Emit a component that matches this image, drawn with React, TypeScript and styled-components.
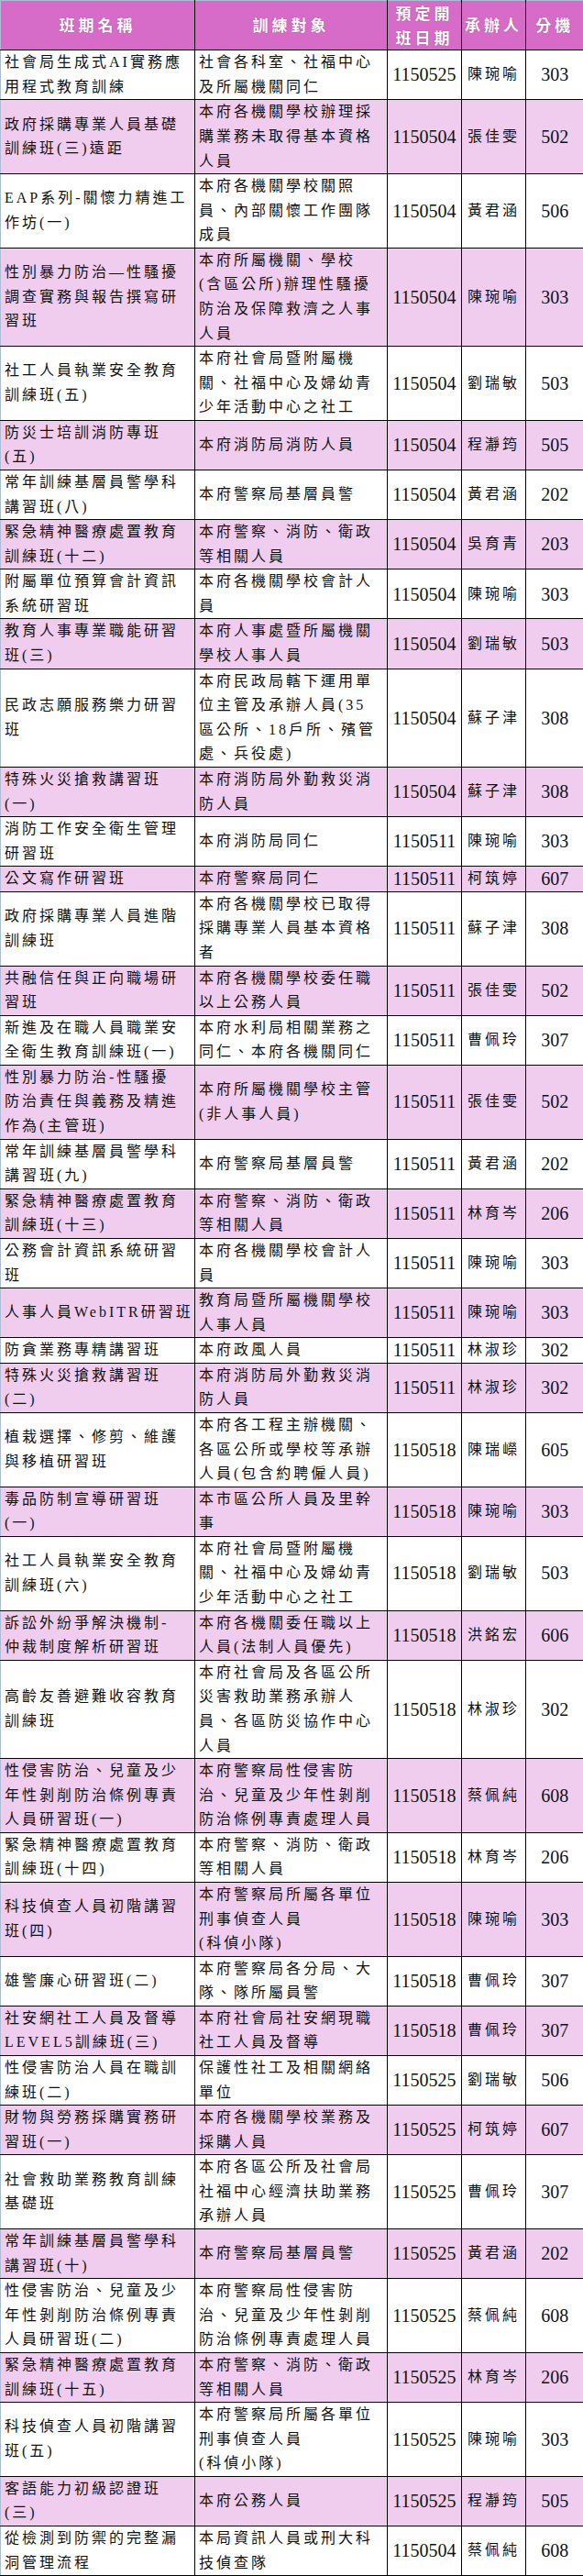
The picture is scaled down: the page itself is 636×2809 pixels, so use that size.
import React from "react";
import styled, { createGlobalStyle } from "styled-components";

type Course = {
    name: string[];
    target: string[];
    date: string;
    staff: string;
    ext: string;
};

const courses: Course[] = [
    { name: ["社會局生成式AI實務應", "用程式教育訓練"], target: ["社會各科室、社福中心", "及所屬機關同仁"], date: "1150525", staff: "陳琬喻", ext: "303" },
    { name: ["政府採購專業人員基礎", "訓練班(三)遠距"], target: ["本府各機關學校辦理採", "購業務未取得基本資格", "人員"], date: "1150504", staff: "張佳雯", ext: "502" },
    { name: ["EAP系列-關懷力精進工", "作坊(一)"], target: ["本府各機關學校關照", "員、內部關懷工作團隊", "成員"], date: "1150504", staff: "黃君涵", ext: "506" },
    { name: ["性別暴力防治—性騷擾", "調查實務與報告撰寫研", "習班"], target: ["本府所屬機關、學校", "(含區公所)辦理性騷擾", "防治及保障救濟之人事", "人員"], date: "1150504", staff: "陳琬喻", ext: "303" },
    { name: ["社工人員執業安全教育", "訓練班(五)"], target: ["本府社會局暨附屬機", "關、社福中心及婦幼青", "少年活動中心之社工"], date: "1150504", staff: "劉瑞敏", ext: "503" },
    { name: ["防災士培訓消防專班", "(五)"], target: ["本府消防局消防人員"], date: "1150504", staff: "程瀞筠", ext: "505" },
    { name: ["常年訓練基層員警學科", "講習班(八)"], target: ["本府警察局基層員警"], date: "1150504", staff: "黃君涵", ext: "202" },
    { name: ["緊急精神醫療處置教育", "訓練班(十二)"], target: ["本府警察、消防、衛政", "等相關人員"], date: "1150504", staff: "吳育青", ext: "203" },
    { name: ["附屬單位預算會計資訊", "系統研習班"], target: ["本府各機關學校會計人", "員"], date: "1150504", staff: "陳琬喻", ext: "303" },
    { name: ["教育人事專業職能研習", "班(三)"], target: ["本府人事處暨所屬機關", "學校人事人員"], date: "1150504", staff: "劉瑞敏", ext: "503" },
    { name: ["民政志願服務樂力研習", "班"], target: ["本府民政局轄下運用單", "位主管及承辦人員(35", "區公所、18戶所、殯管", "處、兵役處)"], date: "1150504", staff: "蘇子津", ext: "308" },
    { name: ["特殊火災搶救講習班", "(一)"], target: ["本府消防局外勤救災消", "防人員"], date: "1150504", staff: "蘇子津", ext: "308" },
    { name: ["消防工作安全衛生管理", "研習班"], target: ["本府消防局同仁"], date: "1150511", staff: "陳琬喻", ext: "303" },
    { name: ["公文寫作研習班"], target: ["本府警察局同仁"], date: "1150511", staff: "柯筑婷", ext: "607" },
    { name: ["政府採購專業人員進階", "訓練班"], target: ["本府各機關學校已取得", "採購專業人員基本資格", "者"], date: "1150511", staff: "蘇子津", ext: "308" },
    { name: ["共融信任與正向職場研", "習班"], target: ["本府各機關學校委任職", "以上公務人員"], date: "1150511", staff: "張佳雯", ext: "502" },
    { name: ["新進及在職人員職業安", "全衛生教育訓練班(一)"], target: ["本府水利局相關業務之", "同仁、本府各機關同仁"], date: "1150511", staff: "曹佩玲", ext: "307" },
    { name: ["性別暴力防治-性騷擾", "防治責任與義務及精進", "作為(主管班)"], target: ["本府所屬機關學校主管", "(非人事人員)"], date: "1150511", staff: "張佳雯", ext: "502" },
    { name: ["常年訓練基層員警學科", "講習班(九)"], target: ["本府警察局基層員警"], date: "1150511", staff: "黃君涵", ext: "202" },
    { name: ["緊急精神醫療處置教育", "訓練班(十三)"], target: ["本府警察、消防、衛政", "等相關人員"], date: "1150511", staff: "林育岑", ext: "206" },
    { name: ["公務會計資訊系統研習", "班"], target: ["本府各機關學校會計人", "員"], date: "1150511", staff: "陳琬喻", ext: "303" },
    { name: ["人事人員WebITR研習班"], target: ["教育局暨所屬機關學校", "人事人員"], date: "1150511", staff: "陳琬喻", ext: "303" },
    { name: ["防貪業務專精講習班"], target: ["本府政風人員"], date: "1150511", staff: "林淑珍", ext: "302" },
    { name: ["特殊火災搶救講習班", "(二)"], target: ["本府消防局外勤救災消", "防人員"], date: "1150511", staff: "林淑珍", ext: "302" },
    { name: ["植栽選擇、修剪、維護", "與移植研習班"], target: ["本府各工程主辦機關、", "各區公所或學校等承辦", "人員(包含約聘僱人員)"], date: "1150518", staff: "陳瑞嶸", ext: "605" },
    { name: ["毒品防制宣導研習班", "(一)"], target: ["本市區公所人員及里幹", "事"], date: "1150518", staff: "陳琬喻", ext: "303" },
    { name: ["社工人員執業安全教育", "訓練班(六)"], target: ["本府社會局暨附屬機", "關、社福中心及婦幼青", "少年活動中心之社工"], date: "1150518", staff: "劉瑞敏", ext: "503" },
    { name: ["訴訟外紛爭解決機制-", "仲裁制度解析研習班"], target: ["本府各機關委任職以上", "人員(法制人員優先)"], date: "1150518", staff: "洪銘宏", ext: "606" },
    { name: ["高齡友善避難收容教育", "訓練班"], target: ["本府社會局及各區公所", "災害救助業務承辦人", "員、各區防災協作中心", "人員"], date: "1150518", staff: "林淑珍", ext: "302" },
    { name: ["性侵害防治、兒童及少", "年性剝削防治條例專責", "人員研習班(一)"], target: ["本府警察局性侵害防", "治、兒童及少年性剝削", "防治條例專責處理人員"], date: "1150518", staff: "蔡佩純", ext: "608" },
    { name: ["緊急精神醫療處置教育", "訓練班(十四)"], target: ["本府警察、消防、衛政", "等相關人員"], date: "1150518", staff: "林育岑", ext: "206" },
    { name: ["科技偵查人員初階講習", "班(四)"], target: ["本府警察局所屬各單位", "刑事偵查人員", "(科偵小隊)"], date: "1150518", staff: "陳琬喻", ext: "303" },
    { name: ["雄警廉心研習班(二)"], target: ["本府警察局各分局、大", "隊、隊所屬員警"], date: "1150518", staff: "曹佩玲", ext: "307" },
    { name: ["社安網社工人員及督導", "LEVEL5訓練班(三)"], target: ["本府社會局社安網現職", "社工人員及督導"], date: "1150518", staff: "曹佩玲", ext: "307" },
    { name: ["性侵害防治人員在職訓", "練班(二)"], target: ["保護性社工及相關網絡", "單位"], date: "1150525", staff: "劉瑞敏", ext: "506" },
    { name: ["財物與勞務採購實務研", "習班(一)"], target: ["本府各機關學校業務及", "採購人員"], date: "1150525", staff: "柯筑婷", ext: "607" },
    { name: ["社會救助業務教育訓練", "基礎班"], target: ["本府各區公所及社會局", "社福中心經濟扶助業務", "承辦人員"], date: "1150525", staff: "曹佩玲", ext: "307" },
    { name: ["常年訓練基層員警學科", "講習班(十)"], target: ["本府警察局基層員警"], date: "1150525", staff: "黃君涵", ext: "202" },
    { name: ["性侵害防治、兒童及少", "年性剝削防治條例專責", "人員研習班(二)"], target: ["本府警察局性侵害防", "治、兒童及少年性剝削", "防治條例專責處理人員"], date: "1150525", staff: "蔡佩純", ext: "608" },
    { name: ["緊急精神醫療處置教育", "訓練班(十五)"], target: ["本府警察、消防、衛政", "等相關人員"], date: "1150525", staff: "林育岑", ext: "206" },
    { name: ["科技偵查人員初階講習", "班(五)"], target: ["本府警察局所屬各單位", "刑事偵查人員", "(科偵小隊)"], date: "1150525", staff: "陳琬喻", ext: "303" },
    { name: ["客語能力初級認證班", "(三)"], target: ["本府公務人員"], date: "1150525", staff: "程瀞筠", ext: "505" },
    { name: ["從檢測到防禦的完整漏", "洞管理流程"], target: ["本局資訊人員或刑大科", "技偵查隊"], date: "1150504", staff: "蔡佩純", ext: "608" },
];

const GlobalStyle = createGlobalStyle`
    body {
        margin: 0;
        background: #ffffff;
    }
`;

const Table = styled.table`
    width: 636px;
    table-layout: fixed;
    border-collapse: collapse;
    font-family: "Liberation Serif", "Noto Sans CJK TC", serif;
    color: #111111;
`;

const HeadCell = styled.th`
    background: #d66bc8;
    color: #ffffff;
    font-family: "Noto Sans CJK TC", sans-serif;
    font-size: 17px;
    font-weight: 700;
    letter-spacing: 4px;
    line-height: 26.6px;
    padding: 0;
    text-align: center;
    vertical-align: middle;
    text-shadow: 0 0 1px rgba(90, 20, 80, 0.6);
    border: 1px solid #000000;
    border-top-color: #a9bdd4;

    &:first-child {
        border-left-color: #a9bdd4;
    }
    &:last-child {
        border-right: none;
    }
`;

const Row = styled.tr<{ $shaded: boolean }>`
    background: ${(p) => (p.$shaded ? "#f0cdee" : "#ffffff")};
`;

const Cell = styled.td<{ $align?: "left" | "center"; $numeric?: boolean }>`
    padding: 0 0 0 ${(p) => (p.$align === "center" ? 0 : 4)}px;
    border: 1px solid #000000;
    text-align: ${(p) => p.$align || "left"};
    vertical-align: middle;
    line-height: 26.58px;
    font-size: ${(p) => (p.$numeric ? 20 : 16)}px;
    letter-spacing: ${(p) => (p.$numeric ? 0 : 3)}px;
    overflow: hidden;

    &:first-child {
        border-left-color: #a9bdd4;
    }
    &:last-child {
        border-right: none;
    }
`;

const Line = styled.span`
    display: block;
    white-space: nowrap;
`;

function Lines({ lines }: { lines: string[] }) {
    return (
        <>
            {lines.map((l, i) => (
                <Line key={i}>{l}</Line>
            ))}
        </>
    );
}

function App() {
    return (
        <>
            <GlobalStyle />
            <Table>
                <colgroup>
                    <col style={{ width: 212 }} />
                    <col style={{ width: 210 }} />
                    <col style={{ width: 81 }} />
                    <col style={{ width: 70 }} />
                    <col style={{ width: 63 }} />
                </colgroup>
                <thead>
                    <tr>
                        <HeadCell>班期名稱</HeadCell>
                        <HeadCell>訓練對象</HeadCell>
                        <HeadCell>
                            <Lines lines={["預定開", "班日期"]} />
                        </HeadCell>
                        <HeadCell>承辦人</HeadCell>
                        <HeadCell>分機</HeadCell>
                    </tr>
                </thead>
                <tbody>
                    {courses.map((c, i) => (
                        <Row key={i} $shaded={i % 2 === 1}>
                            <Cell>
                                <Lines lines={c.name} />
                            </Cell>
                            <Cell>
                                <Lines lines={c.target} />
                            </Cell>
                            <Cell $align="center" $numeric>
                                {c.date}
                            </Cell>
                            <Cell $align="center">{c.staff}</Cell>
                            <Cell $align="center" $numeric>
                                {c.ext}
                            </Cell>
                        </Row>
                    ))}
                </tbody>
            </Table>
        </>
    );
}

export default App;
